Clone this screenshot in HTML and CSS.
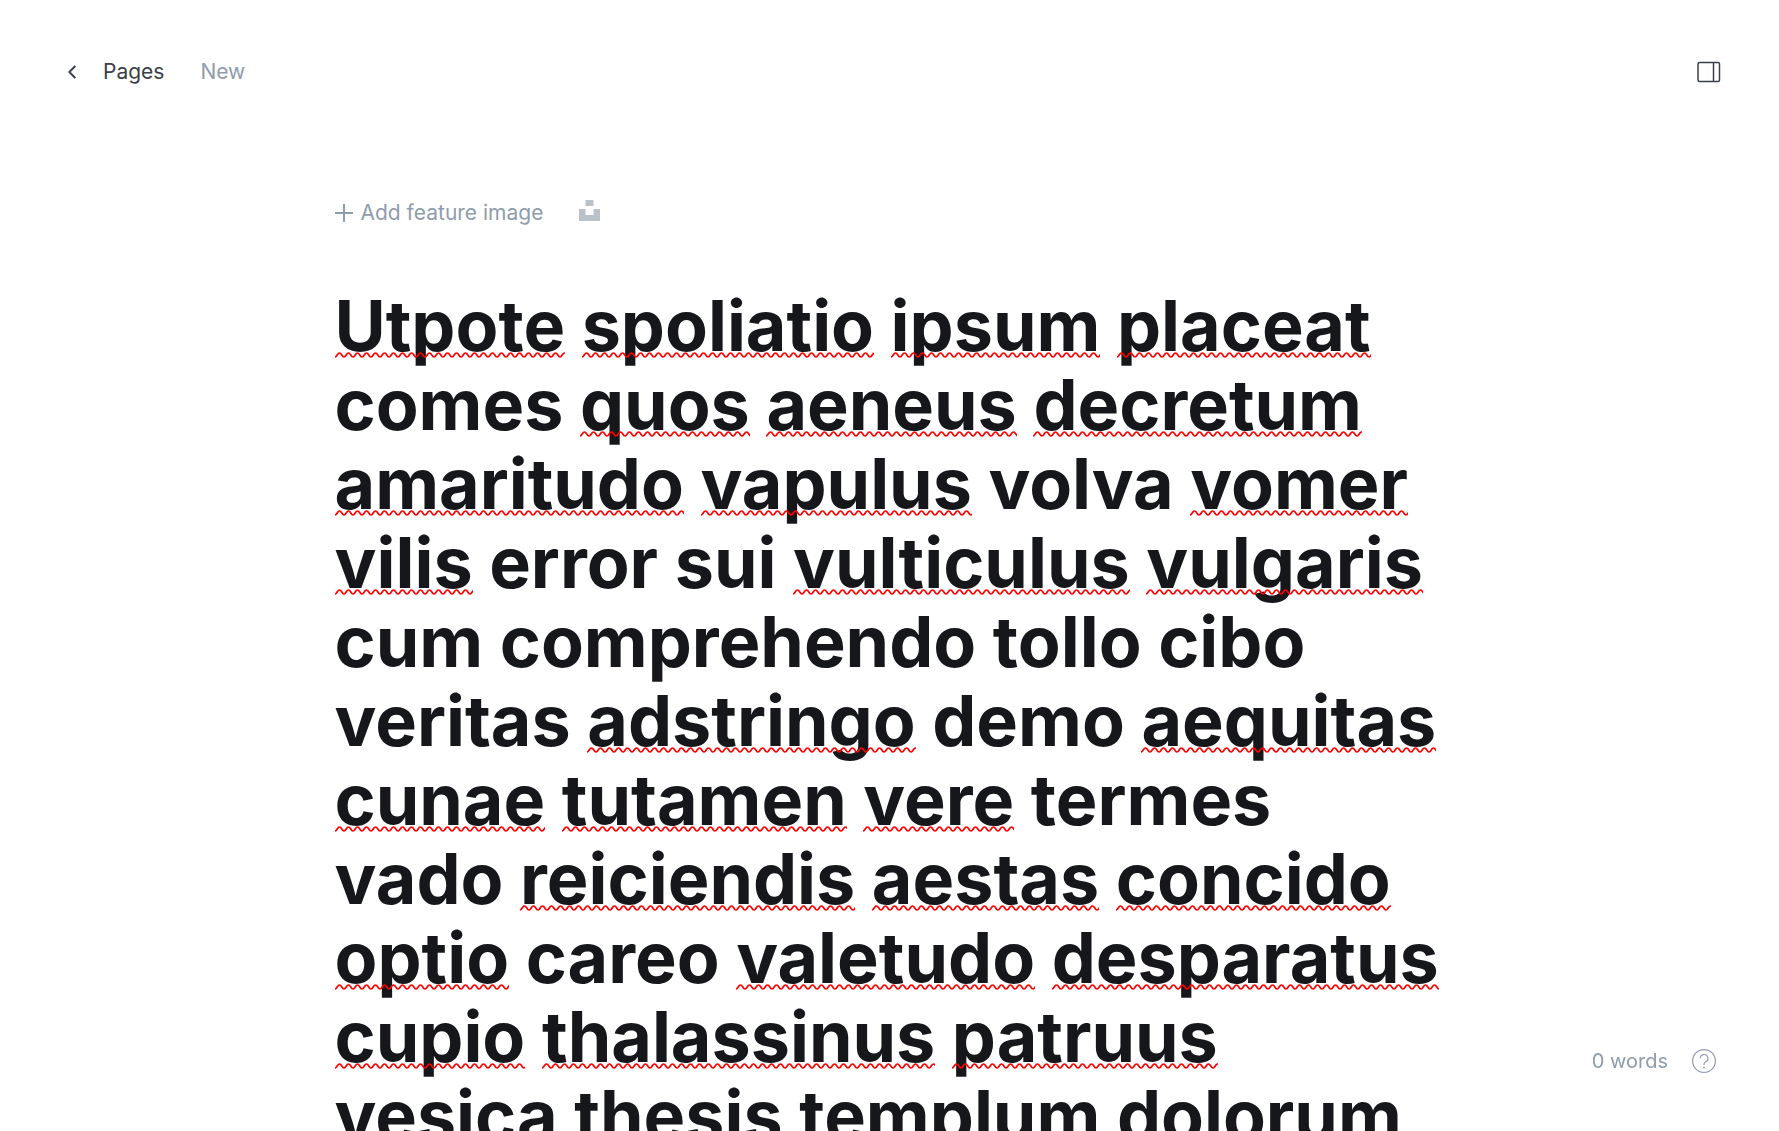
FILE: index.html
```html
<!DOCTYPE html>
<html lang="en">
<head>
<meta charset="utf-8">
<meta name="viewport" content="width=device-width, initial-scale=1">
<title>New page</title>
<link rel="stylesheet" href="styles.css">
</head>
<body>
<div class="editor">
  <header class="topbar">
    <nav class="crumbs" aria-label="Breadcrumb">
      <a class="back" href="#pages">
        <svg class="chevron" viewBox="0 0 8 14" width="8" height="14" aria-hidden="true"><path d="M7.300 1 1.300 7l6 6"/></svg>
        Pages
      </a>
      <span class="status">New</span>
    </nav>
    <button class="icon-button settings" type="button" aria-label="Settings">
      <svg viewBox="0 0 24 22" width="24" height="22" aria-hidden="true"><rect x="1" y="1.500" width="21.500" height="19" rx="1.500"/><path d="M16.500 1.500v19"/></svg>
    </button>
  </header>
  <main class="canvas">
    <div class="feature">
      <button class="add-image" type="button">
        <svg viewBox="0 0 18 18" width="18" height="18" aria-hidden="true"><path d="M9 0v18M0 9h18"/></svg>
        Add feature image
      </button>
      <button class="icon-button unsplash" type="button" aria-label="Choose from Unsplash">
        <svg viewBox="0 0 21 21" width="21" height="21" aria-hidden="true"><path d="M6.500 0h8v6h-8zM0 9h6.500v6h8V9H21v12H0z"/></svg>
      </button>
    </div>
    <h1 class="title" contenteditable="true" spellcheck="false"><span class="sp">Utpote</span> <span class="sp">spoliatio</span> <span class="sp">ipsum</span> <span class="sp">placeat</span> comes <span class="sp">quos</span> <span class="sp">aeneus</span> <span class="sp">decretum</span> <span class="sp">amaritudo</span> <span class="sp">vapulus</span> volva <span class="sp">vomer</span> <span class="sp">vilis</span> error sui <span class="sp">vulticulus</span> <span class="sp">vulgaris</span> cum comprehendo tollo cibo<br>veritas <span class="sp">adstringo</span> demo <span class="sp">aequitas</span> <span class="sp">cunae</span> <span class="sp">tutamen</span> <span class="sp">vere</span> termes<br>vado <span class="sp">reiciendis</span> <span class="sp">aestas</span> <span class="sp">concido</span> <span class="sp">optio</span> careo <span class="sp">valetudo</span> <span class="sp">desparatus</span> <span class="sp">cupio</span> <span class="sp">thalassinus</span> <span class="sp">patruus</span><br><span class="sp">vesica</span> thesis <span class="sp">templum</span> <span class="sp">dolorum</span></h1>
  </main>
  <footer class="wordcount">
    <span>0 words</span>
    <a class="help" href="#help" aria-label="Help">
      <svg viewBox="0 0 24 24" width="24" height="24" aria-hidden="true"><circle cx="12" cy="12" r="11.400"/><path d="M8.300 9.300a3.800 3.800 0 1 1 5.300 3.500c-1.100.5-1.600 1.100-1.600 2.200v1"/><circle class="dot" cx="12" cy="18.500" r=".9"/></svg>
    </a>
  </footer>
</div>
</body>
</html>
```
FILE: styles.css
```css
* {
  box-sizing: border-box;
}

body {
  margin: 0;
  background: #fff;
  color: #394047;
  font-family: Inter, "Liberation Sans", sans-serif;
  font-size: 21px;
  line-height: 24px;
}

button {
  padding: 0;
  border: 0;
  background: none;
  color: inherit;
  font: inherit;
  cursor: pointer;
}

a {
  color: inherit;
  text-decoration: none;
}

svg {
  display: block;
  flex: none;
  fill: none;
  stroke: currentColor;
}

.editor {
  display: flex;
  flex-direction: column;
  height: 100vh;
  overflow: hidden;
}

.topbar {
  display: flex;
  flex: none;
  align-items: center;
  justify-content: space-between;
  padding: 60px 58px 0 68px;
}

.crumbs,
.back {
  display: flex;
  align-items: center;
}

.crumbs {
  gap: 36px;
}

.back {
  gap: 27px;
}

.chevron {
  stroke-width: 2;
}

.status,
.feature,
.wordcount {
  color: #8e9cac;
}

.settings svg {
  stroke-width: 1.5;
}

.canvas {
  flex: 1;
  width: 100%;
  min-height: 0;
  max-width: 1110px;
  margin: 0 auto;
  padding-top: 116px;
}

.feature {
  display: flex;
  align-items: center;
  gap: 36px;
}

.add-image {
  display: flex;
  align-items: center;
  gap: 8px;
}

.add-image svg {
  stroke-width: 2;
}

.unsplash svg {
  margin-bottom: 4px;
  fill: #b9c2ca;
  stroke: none;
}

.title {
  margin: 61px -16px 0 0;
  color: #15171a;
  font-size: 70px;
  font-weight: 700;
  line-height: 79px;
  outline: none;
}

.sp {
  position: relative;
}

/* Spelling squiggle, drawn over the descenders */
.sp::after {
  content: "";
  position: absolute;
  right: 0;
  bottom: 10px;
  left: 0;
  height: 6px;
  background: url("data:image/svg+xml,%3Csvg xmlns='http://www.w3.org/2000/svg' width='9' height='6'%3E%3Cpath d='M-4.500 1C-2.200 1-2.200 5 0 5S2.200 1 4.500 1 6.800 5 9 5s2.200-4 4.500-4' fill='none' stroke='red' stroke-width='1.700'/%3E%3C/svg%3E") repeat-x;
}

.wordcount {
  position: fixed;
  right: 63px;
  bottom: 58px;
  display: flex;
  align-items: center;
  gap: 24px;
  font-size: 20px;
}

.help svg {
  stroke-width: 1.2;
}

.help .dot {
  fill: currentColor;
  stroke: none;
}
```
